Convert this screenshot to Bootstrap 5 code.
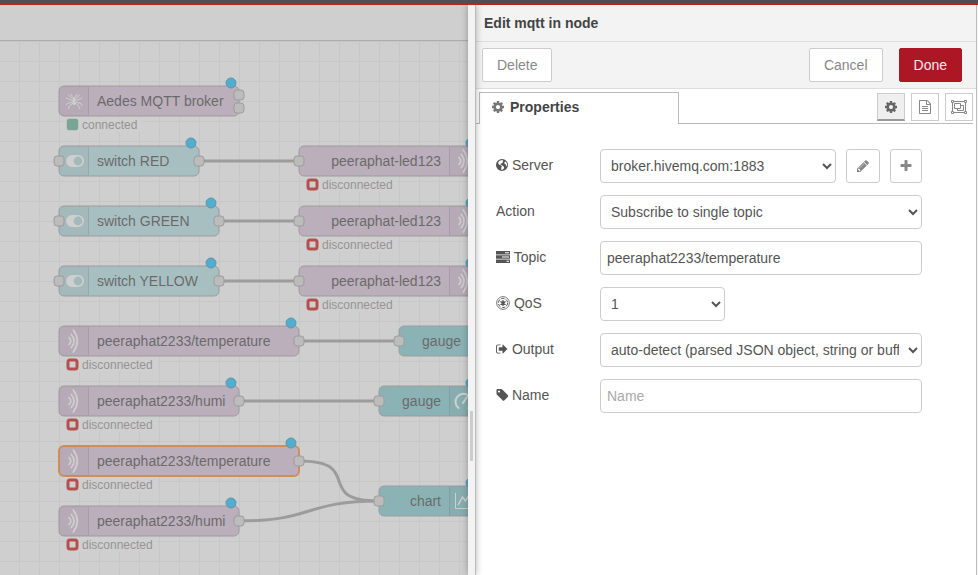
<!DOCTYPE html>
<html lang="en">
<head>
<meta charset="utf-8">
<meta name="viewport" content="width=device-width, initial-scale=1">
<title>Edit mqtt in node</title>
<link href="https://cdn.jsdelivr.net/npm/bootstrap@5.3.0/dist/css/bootstrap.min.css" rel="stylesheet">
<style>
  body { font-family: "Liberation Sans", Arial, sans-serif; font-size: 14px; line-height: 20px; color: #555; background: #fff; }
  .app-bar { height: 5px; background: #4f4f4f; border-bottom: 2px solid #c41e1e; }
  .workspace { min-width: 0; background: #fff; }
  .flow-tabs { height: 36px; border-bottom: 1px solid #bbb; background: #fff; }
  .shade { background: rgba(160, 160, 160, .5); }
  .flow-canvas { min-height: 0; }
  .flow-canvas text { font-size: 14px; fill: #333; }
  .flow-canvas .state-text { font-size: 12px; fill: #888; }
  .body-mqtt { fill: #d8bfd8; stroke: #999; }
  .body-switch { fill: #b0dfe3; stroke: #999; }
  .body-dash { fill: #77c6cc; stroke: #999; }
  .picked { stroke: #ff7f0e; stroke-width: 2; }
  .wire { fill: none; stroke: #999; stroke-width: 3; }
  .port { fill: #d9d9d9; stroke: #999; }
  .edited { fill: #00bcff; stroke: #2a86b0; }
  .glyph { fill: none; stroke: #fff; stroke-width: 2; stroke-linecap: round; }

  .tray { width: 510px; }
  .tray-grip { width: 8px; background: #f3f3f3; border-right: 1px solid #bbb; box-shadow: 0 0 7px rgba(0, 0, 0, .3); cursor: col-resize; }
  .tray-grip span { width: 3px; height: 50px; margin-bottom: 114px; background: #ccc; }
  .tray-main { min-width: 0; border-right: 1px solid #bbb; background: #fff; }
  .tray-edge { width: 1px; background: #f3f3f3; }
  .tray-title { height: 37px; padding: 0 8px; font-size: 14px; line-height: 36px; color: #444; background: #f3f3f3; border-bottom: 1px solid #ddd; }
  .tray-tools { height: 47px; padding: 0 14px 0 6px; background: #f3f3f3; border-bottom: 1px solid #ddd; }
  .nr-btn { --bs-btn-font-size: 14px; --bs-btn-line-height: 20px; --bs-btn-padding-x: 14px; --bs-btn-padding-y: 6px; --bs-btn-border-radius: 2px;
    --bs-btn-color: #888; --bs-btn-bg: #fff; --bs-btn-border-color: #ccc; --bs-btn-hover-bg: #f3f3f3; --bs-btn-hover-color: #666; --bs-btn-hover-border-color: #ccc; }
  .nr-btn.main-action { --bs-btn-color: #eee; --bs-btn-bg: #ad1625; --bs-btn-border-color: #ad1625; --bs-btn-hover-bg: #6e0a1e; --bs-btn-hover-color: #eee; }
  .nr-btn.tab-tool { --bs-btn-padding-x: 0px; --bs-btn-padding-y: 0px; --bs-btn-border-radius: 0px; width: 28px; height: 28px; }
  .nr-btn.current { --bs-btn-bg: #efefef; --bs-btn-color: #666; border-bottom: 2px solid #999; }
  .nr-btn.side { --bs-btn-padding-x: 9px; --bs-btn-border-radius: 3px; margin-left: 10px; }
  .tab-strip { height: 35px; padding-right: 3px; }
  .strip-line { border-bottom: 1px solid #bbb; }
  .strip-line.lead-in { width: 3px; }
  .strip-tools { gap: 6px; padding-top: 2px; }
  .tab-face { width: 200px; padding: 0 12px 4px; margin-top: 3px; border: 1px solid #bbb; border-bottom: 0; color: #444; font-weight: bold; }
  .tab-face:hover { color: #444; }
  .tab-face svg { color: #777; margin-right: 6px; }
  .edit-form { padding: 25px 54px 20px 20px; gap: 12px; }
  .edit-form label { width: 104px; padding-bottom: 2px; color: #555; }
  .nr-field, .nr-field:focus { height: 34px; padding: 6px; border: 1px solid #ccc; border-radius: 4px; background: #fff; color: #555; font-size: 14px; line-height: 20px; min-width: 0; }
  .nr-field::placeholder { color: #aaa; }
  .wide-field { flex: 1 1 0; }
  .qos-field { width: 125px; }
  .ico { height: 14px; fill: currentColor; vertical-align: -2px; }
  .w12 { width: 12px; }
  .w14 { width: 14px; }
  .w16 { width: 16px; height: 14px; }
</style>
<script src="https://cdn.jsdelivr.net/npm/bootstrap@5.3.0/dist/js/bootstrap.bundle.min.js"></script>
</head>
<body class="vh-100 d-flex flex-column overflow-hidden">
<svg class="d-none">
  <symbol id="i-cog" viewBox="128 0 1536 1792"><path d="M1152 896q0-106-75-181t-181-75-181 75-75 181 75 181 181 75 181-75 75-181zm512-109v222q0 12-8 23t-20 13l-185 28q-19 54-39 91 35 50 107 138 10 12 10 25t-9 23q-27 37-99 108t-94 71q-12 0-26-9l-138-108q-44 23-91 38-16 136-29 186-7 28-36 28h-222q-14 0-24.500-8.500t-11.500-21.500l-28-184q-49-16-90-37l-141 107q-10 9-25 9-14 0-25-11-126-114-165-168-7-10-7-23 0-12 8-23 15-21 51-66.500t54-70.500q-27-50-41-99l-183-27q-13-2-21-12.500t-8-23.500v-222q0-12 8-23t19-13l186-28q14-46 39-92-40-57-107-138-10-12-10-24 0-10 9-23 26-36 98.500-107.500t94.500-71.500q13 0 26 10l138 107q44-23 91-38 16-136 29-186 7-28 36-28h222q14 0 24.500 8.500t11.500 21.500l28 184q49 16 90 37l142-107q9-9 24-9 13 0 25 10 129 119 165 170 7 8 7 22 0 12-8 23-15 21-51 66.500t-54 70.500q26 50 41 98l183 28q13 2 21 12.500t8 23.500z"/></symbol>
  <symbol id="i-doc" viewBox="128 0 1536 1792"><path d="M1596 380q28 28 48 76t20 88v1152q0 40-28 68t-68 28h-1344q-40 0-68-28t-28-68v-1600q0-40 28-68t68-28h896q40 0 88 20t76 48zm-444-244v376h376q-10-29-22-41l-313-313q-12-12-41-22zm384 1528v-1024h-416q-40 0-68-28t-28-68v-416h-768v1536h1280zm-1024-864q0-14 9-23t23-9h704q14 0 23 9t9 23v64q0 14-9 23t-23 9h-704q-14 0-23-9t-9-23v-64zm736 224q14 0 23 9t9 23v64q0 14-9 23t-23 9h-704q-14 0-23-9t-9-23v-64q0-14 9-23t23-9h704zm0 256q14 0 23 9t9 23v64q0 14-9 23t-23 9h-704q-14 0-23-9t-9-23v-64q0-14 9-23t23-9h704z"/></symbol>
  <symbol id="i-group" viewBox="0 0 16 14"><g fill="none" stroke="currentColor"><path d="M1.500 3v8M14.500 3v8M3 1.500h10M3 12.500h10"/><path d="M.5.5h2v2h-2zM13.500.5h2v2h-2zM.5 11.500h2v2h-2zM13.500 11.500h2v2h-2z"/><path d="M3.500 3.500h6v5h-6zM9.500 5.500h3v5h-6v-2"/></g></symbol>
  <symbol id="i-pencil" viewBox="128 0 1536 1792"><path d="M491 1536l91-91-235-235-91 91v107h128v128h107zm523-928q0-22-22-22-10 0-17 7l-542 542q-7 7-7 17 0 22 22 22 10 0 17-7l542-542q7-7 7-17zm-54-192l416 416-832 832h-416v-416zm683 96q0 53-37 90l-166 166-416-416 166-165q36-38 90-38 53 0 91 38l235 234q37 39 37 91z"/></symbol>
  <symbol id="i-plus" viewBox="192 0 1408 1792"><path d="M1600 736v192q0 40-28 68t-68 28h-416v416q0 40-28 68t-68 28h-192q-40 0-68-28t-28-68v-416h-416q-40 0-68-28t-28-68v-192q0-40 28-68t68-28h416v-416q0-40 28-68t68-28h192q40 0 68 28t28 68v416h416q40 0 68 28t28 68z"/></symbol>
  <symbol id="i-tag" viewBox="64 0 1536 1792"><path d="M576 448q0-53-37.500-90.500t-90.500-37.500-90.500 37.500-37.500 90.500 37.500 90.500 90.500 37.500 90.500-37.500 37.500-90.500zm1067 576q0 53-37 90l-491 492q-39 37-91 37-53 0-90-37l-715-716q-38-37-64.500-101t-26.500-117v-416q0-52 38-90t90-38h416q53 0 117 26.500t102 64.500l715 714q37 39 37 91z"/></symbol>
  <symbol id="i-out" viewBox="64 0 1664 1792"><path d="M704 1440q0 4 1 20t.5 26.500-3 23.500-10 19.500-20.500 6.500h-320q-119 0-203.500-84.500t-84.500-203.500v-704q0-119 84.500-203.500t203.500-84.500h320q13 0 22.500 9.500t9.500 22.500q0 4 1 20t.5 26.500-3 23.500-10 19.500-20.500 6.500h-320q-66 0-113 47t-47 113v704q0 66 47 113t113 47h312l11.500 1 11.500 3 8 5.500 7 9 2 13.500zm928-544q0 26-19 45l-544 544q-19 19-45 19t-45-19-19-45v-288h-448q-26 0-45-19t-19-45v-384q0-26 19-45t45-19h448v-288q0-26 19-45t45-19 45 19l544 544q19 19 19 45z"/></symbol>
  <symbol id="i-globe" viewBox="0 0 12 14"><path fill-rule="evenodd" d="M6 1a6 6 0 1 1 0 12A6 6 0 0 1 6 1zM5.200 2.200 3.600 2.800 2.500 4 2.200 5.600 3.300 6.800 4.800 7.300 5.900 8.400 5.300 9.600 5.100 11.400 6.200 12.100 8 10.400 8 9 6.800 7.700 5.300 7 4.500 6.500 4.700 5.500 5.900 5.300 7.200 4.100 6.600 3.200 7.400 2.300zM9.300 3.400 8.300 4.600 8.700 6 9.900 6.600 10.300 8.500 11.100 7.500 10.900 5.600 10.200 4.200z"/></symbol>
  <symbol id="i-tasks" viewBox="0 0 14 14"><path fill-rule="evenodd" d="M0 1h14v3.400H0zM9 2.200v1h4v-1zM0 5.300h14v3.400H0zM6 6.500v1h7v-1zM0 9.600h14V13H0zM10.500 10.800v1H13v-1z"/></symbol>
  <symbol id="i-empire" viewBox="0 0 14 14"><g fill="none" stroke="currentColor"><circle cx="7" cy="7" r="6.400" stroke-width=".8"/><circle cx="7" cy="7" r="4.600" stroke-width="1" stroke-dasharray="3.400 1.417"/><path stroke-width="1.200" d="M7 4v6M4.400 5.500l5.200 3M4.400 8.500l5.200-3"/></g><circle cx="7" cy="7" r="1.800"/></symbol>

  <symbol id="n-waves" viewBox="0 0 30 30"><g fill="none" stroke="#fff" stroke-width="1.700" stroke-linecap="round"><path d="M14.300 4q8 11 0 22"/><path d="M12.300 8.500q5.500 6.500 0 13"/><path d="M10 11.500q3.500 3.500 0 7"/></g></symbol>
  <symbol id="n-side" viewBox="0 0 30 30"><path d="M5 0h25v30H5a5 5 0 0 1-5-5V5a5 5 0 0 1 5-5z" fill-opacity=".05"/><path d="M29.500 1v28" stroke="#000" stroke-opacity=".15"/></symbol>
  <symbol id="n-off" viewBox="0 0 100 16"><path fill="#fff" d="M0 1h92v14H0z"/><rect x="3" y="3" width="9" height="9" rx="2" fill="#fff" stroke="#c00" stroke-width="3"/></symbol>
  <symbol id="n-toggle" viewBox="0 0 30 30"><path fill="#fff" fill-rule="evenodd" d="M13 9h6a6 6 0 0 1 0 12h-6a6 6 0 0 1 0-12zm6 1.600a4.400 4.400 0 1 0 0 8.800 4.400 4.400 0 0 0 0-8.800z"/></symbol>
</svg>

<header class="app-bar flex-shrink-0"></header>
<main class="d-flex flex-fill overflow-hidden">
  <section class="workspace position-relative flex-fill d-flex flex-column overflow-hidden">
    <div class="flow-tabs flex-shrink-0"></div>
    <svg class="flow-canvas flex-fill w-100 d-block">
      <defs><pattern id="grid" width="20" height="20" patternUnits="userSpaceOnUse" x="19" y="0"><path d="M.5 0v20M0 .5h20" stroke="#eee"/></pattern></defs>
      <rect width="100%" height="100%" fill="url(#grid)"/>

      <g class="wire">
        <path d="M199 120H299M219 180H299M219 240H299M299 300H399M239 360H379"/>
        <path d="M299 420C366 420 312 460 379 460"/>
        <path d="M239 480C314 480 304 460 379 460"/>
      </g>

      <g transform="translate(59 45)">
        <rect class="body-mqtt" width="180" height="30" rx="5"/><use href="#n-side" width="30" height="30"/>
        <g fill="none" stroke="#fff" stroke-width="1"><path d="M14.500 14 9 8.500M15.500 14 21 8.500M14 15 7 12M16 15l7-3M14 16l-6 1.500-1 2M16 16l6 1.500 1 2M14 17l-4 3.500-.5 2.500M16 17l4 3.500.5 2.500M13.500 11 12 8M16.500 11 18 8"/><path stroke-width="2" d="M15 11v8"/></g>
        <text x="38" y="20">Aedes MQTT broker</text>
        <rect class="port" x="175" y="4" width="10" height="10" rx="3"/><rect class="port" x="175" y="17" width="10" height="10" rx="3"/>
        <circle class="edited" cx="172" cy="-3" r="5"/>
        <path fill="#fff" d="M6 32h76v14H6z"/><rect x="8" y="33" width="11" height="11" rx="2" fill="#5a8" stroke="#5a8" stroke-opacity=".5"/>
        <text class="state-text" x="23" y="43">connected</text>
      </g>

      <g transform="translate(59 105)">
        <rect class="body-switch" width="140" height="30" rx="5"/><use href="#n-side" width="30" height="30"/><use href="#n-toggle" width="30" height="30"/>
        <text x="38" y="20">switch RED</text>
        <rect class="port" x="-5" y="10" width="10" height="10" rx="3"/><rect class="port" x="135" y="10" width="10" height="10" rx="3"/>
        <circle class="edited" cx="132" cy="-3" r="5"/>
      </g>
      <g transform="translate(59 165)">
        <rect class="body-switch" width="160" height="30" rx="5"/><use href="#n-side" width="30" height="30"/><use href="#n-toggle" width="30" height="30"/>
        <text x="38" y="20">switch GREEN</text>
        <rect class="port" x="-5" y="10" width="10" height="10" rx="3"/><rect class="port" x="155" y="10" width="10" height="10" rx="3"/>
        <circle class="edited" cx="152" cy="-3" r="5"/>
      </g>
      <g transform="translate(59 225)">
        <rect class="body-switch" width="160" height="30" rx="5"/><use href="#n-side" width="30" height="30"/><use href="#n-toggle" width="30" height="30"/>
        <text x="38" y="20">switch YELLOW</text>
        <rect class="port" x="-5" y="10" width="10" height="10" rx="3"/><rect class="port" x="155" y="10" width="10" height="10" rx="3"/>
        <circle class="edited" cx="152" cy="-3" r="5"/>
      </g>

      <g transform="translate(59 285)">
        <rect class="body-mqtt" width="240" height="30" rx="5"/><use href="#n-side" width="30" height="30"/><use href="#n-waves" width="30" height="30"/>
        <text x="38" y="20">peeraphat2233/temperature</text>
        <rect class="port" x="235" y="10" width="10" height="10" rx="3"/><circle class="edited" cx="232" cy="-3" r="5"/>
        <use href="#n-off" x="6" y="31" width="100" height="16"/><text class="state-text" x="23" y="43">disconnected</text>
      </g>
      <g transform="translate(59 345)">
        <rect class="body-mqtt" width="180" height="30" rx="5"/><use href="#n-side" width="30" height="30"/><use href="#n-waves" width="30" height="30"/>
        <text x="38" y="20">peeraphat2233/humi</text>
        <rect class="port" x="175" y="10" width="10" height="10" rx="3"/><circle class="edited" cx="172" cy="-3" r="5"/>
        <use href="#n-off" x="6" y="31" width="100" height="16"/><text class="state-text" x="23" y="43">disconnected</text>
      </g>
      <g transform="translate(59 405)">
        <rect class="body-mqtt picked" width="240" height="30" rx="5"/><use href="#n-side" width="30" height="30"/><use href="#n-waves" width="30" height="30"/>
        <text x="38" y="20">peeraphat2233/temperature</text>
        <rect class="port" x="235" y="10" width="10" height="10" rx="3"/><circle class="edited" cx="232" cy="-3" r="5"/>
        <use href="#n-off" x="6" y="31" width="100" height="16"/><text class="state-text" x="23" y="43">disconnected</text>
      </g>
      <g transform="translate(59 465)">
        <rect class="body-mqtt" width="180" height="30" rx="5"/><use href="#n-side" width="30" height="30"/><use href="#n-waves" width="30" height="30"/>
        <text x="38" y="20">peeraphat2233/humi</text>
        <rect class="port" x="175" y="10" width="10" height="10" rx="3"/><circle class="edited" cx="172" cy="-3" r="5"/>
        <use href="#n-off" x="6" y="31" width="100" height="16"/><text class="state-text" x="23" y="43">disconnected</text>
      </g>

      <g transform="translate(299 105)">
        <rect class="body-mqtt" width="180" height="30" rx="5"/><path d="M150 0h25v30h-25z" fill-opacity=".05"/><path d="M150.500 1v28" stroke="#000" stroke-opacity=".15"/><use href="#n-waves" x="150" width="30" height="30"/>
        <text x="142" y="20" text-anchor="end">peeraphat-led123</text>
        <rect class="port" x="-5" y="10" width="10" height="10" rx="3"/><circle class="edited" cx="172" cy="-3" r="5"/>
        <use href="#n-off" x="6" y="31" width="100" height="16"/><text class="state-text" x="23" y="43">disconnected</text>
      </g>
      <g transform="translate(299 165)">
        <rect class="body-mqtt" width="180" height="30" rx="5"/><path d="M150 0h25v30h-25z" fill-opacity=".05"/><path d="M150.500 1v28" stroke="#000" stroke-opacity=".15"/><use href="#n-waves" x="150" width="30" height="30"/>
        <text x="142" y="20" text-anchor="end">peeraphat-led123</text>
        <rect class="port" x="-5" y="10" width="10" height="10" rx="3"/><circle class="edited" cx="172" cy="-3" r="5"/>
        <use href="#n-off" x="6" y="31" width="100" height="16"/><text class="state-text" x="23" y="43">disconnected</text>
      </g>
      <g transform="translate(299 225)">
        <rect class="body-mqtt" width="180" height="30" rx="5"/><path d="M150 0h25v30h-25z" fill-opacity=".05"/><path d="M150.500 1v28" stroke="#000" stroke-opacity=".15"/><use href="#n-waves" x="150" width="30" height="30"/>
        <text x="142" y="20" text-anchor="end">peeraphat-led123</text>
        <rect class="port" x="-5" y="10" width="10" height="10" rx="3"/><circle class="edited" cx="172" cy="-3" r="5"/>
        <use href="#n-off" x="6" y="31" width="100" height="16"/><text class="state-text" x="23" y="43">disconnected</text>
      </g>

      <g transform="translate(399 285)">
        <rect class="body-dash" width="100" height="30" rx="5"/>
        <text x="62" y="20" text-anchor="end">gauge</text>
        <rect class="port" x="-5" y="10" width="10" height="10" rx="3"/>
      </g>
      <g transform="translate(379 345)">
        <rect class="body-dash" width="100" height="30" rx="5"/><path d="M70 0h25v30H70z" fill-opacity=".05"/><path d="M70.500 1v28" stroke="#000" stroke-opacity=".15"/>
        <path class="glyph" d="M79.500 22a8 8 0 1 1 10 0M84 17l4-6"/>
        <text x="62" y="20" text-anchor="end">gauge</text>
        <rect class="port" x="-5" y="10" width="10" height="10" rx="3"/><circle class="edited" cx="92" cy="-3" r="5"/>
      </g>
      <g transform="translate(379 445)">
        <rect class="body-dash" width="100" height="30" rx="5"/><path d="M70 0h25v30H70z" fill-opacity=".05"/><path d="M70.500 1v28" stroke="#000" stroke-opacity=".15"/>
        <path fill="none" stroke="#fff" d="M76.500 7v15.500H92"/><path fill="none" stroke="#fff" stroke-width="1.500" d="m79 19 4.500-8 3 4 4-7"/>
        <text x="62" y="20" text-anchor="end">chart</text>
        <rect class="port" x="-5" y="10" width="10" height="10" rx="3"/><circle class="edited" cx="92" cy="-3" r="5"/>
      </g>
    </svg>
    <div class="shade position-absolute top-0 start-0 w-100 h-100"></div>
  </section>

  <aside class="tray d-flex flex-shrink-0">
    <div class="tray-grip position-relative z-1 flex-shrink-0 d-flex flex-column align-items-center justify-content-end"><span></span></div>
    <div class="tray-main flex-fill">
      <h1 class="tray-title fw-bold m-0">Edit mqtt in node</h1>
      <div class="tray-tools d-flex align-items-center">
        <button type="button" class="btn nr-btn me-auto">Delete</button>
        <button type="button" class="btn nr-btn me-3">Cancel</button>
        <button type="button" class="btn nr-btn main-action">Done</button>
      </div>
      <div class="tab-strip d-flex">
        <div class="strip-line lead-in"></div>
        <a href="#edit-form" class="tab-face d-flex align-items-center text-decoration-none"><svg class="ico w12"><use href="#i-cog"/></svg>Properties</a>
        <div class="strip-line flex-fill"></div>
        <div class="strip-line strip-tools d-flex align-items-center">
          <button type="button" class="btn nr-btn tab-tool current" aria-label="Properties"><svg class="ico w12"><use href="#i-cog"/></svg></button>
          <button type="button" class="btn nr-btn tab-tool" aria-label="Description"><svg class="ico w12"><use href="#i-doc"/></svg></button>
          <button type="button" class="btn nr-btn tab-tool" aria-label="Appearance"><svg class="ico w16"><use href="#i-group"/></svg></button>
        </div>
      </div>
      <form id="edit-form" class="edit-form d-flex flex-column">
        <div class="d-flex align-items-center">
          <label for="server" class="flex-shrink-0"><svg class="ico w12"><use href="#i-globe"/></svg> Server</label>
          <select id="server" class="nr-field wide-field"><option>broker.hivemq.com:1883</option></select>
          <button type="button" class="btn nr-btn side" aria-label="Edit server"><svg class="ico w14"><use href="#i-pencil"/></svg></button>
          <button type="button" class="btn nr-btn side" aria-label="Add server"><svg class="ico w12"><use href="#i-plus"/></svg></button>
        </div>
        <div class="d-flex align-items-center">
          <label for="action" class="flex-shrink-0">Action</label>
          <select id="action" class="nr-field wide-field"><option>Subscribe to single topic</option></select>
        </div>
        <div class="d-flex align-items-center">
          <label for="topic" class="flex-shrink-0"><svg class="ico w14"><use href="#i-tasks"/></svg> Topic</label>
          <input id="topic" type="text" class="nr-field wide-field" value="peeraphat2233/temperature">
        </div>
        <div class="d-flex align-items-center">
          <label for="qos" class="flex-shrink-0"><svg class="ico w14"><use href="#i-empire"/></svg> QoS</label>
          <select id="qos" class="nr-field qos-field"><option>1</option></select>
        </div>
        <div class="d-flex align-items-center">
          <label for="output" class="flex-shrink-0"><svg class="ico w12"><use href="#i-out"/></svg> Output</label>
          <select id="output" class="nr-field wide-field"><option>auto-detect (parsed JSON object, string or buffer)</option></select>
        </div>
        <div class="d-flex align-items-center">
          <label for="name" class="flex-shrink-0"><svg class="ico w12"><use href="#i-tag"/></svg> Name</label>
          <input id="name" type="text" class="nr-field wide-field" placeholder="Name">
        </div>
      </form>
    </div>
    <div class="tray-edge flex-shrink-0"></div>
  </aside>
</main>
</body>
</html>
